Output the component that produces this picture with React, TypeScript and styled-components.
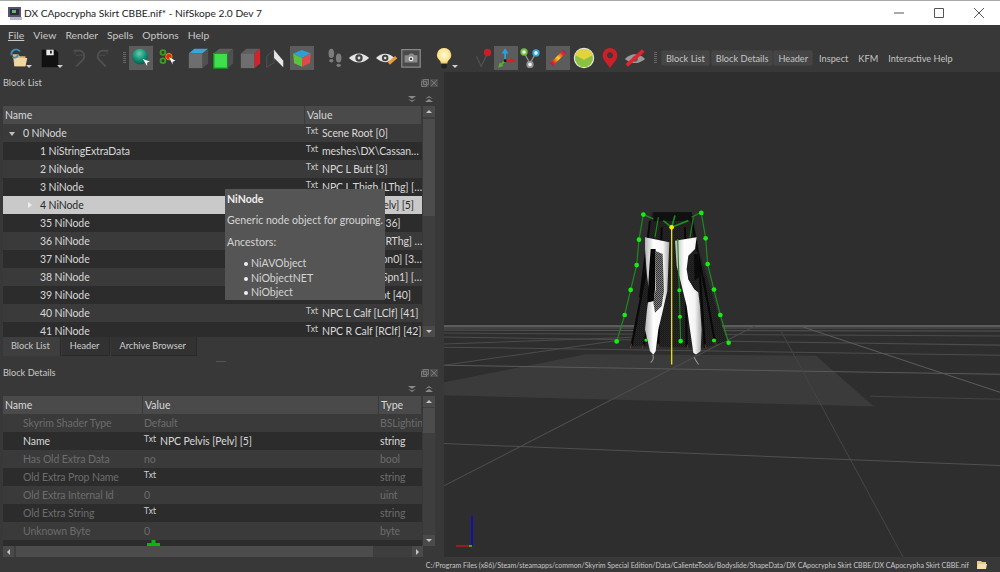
import * as React from 'react'
import styled, { createGlobalStyle } from 'styled-components'

const UI_FONT = 'Lato, "Open Sans", "Noto Sans", sans-serif'

const GlobalStyle = createGlobalStyle`
    html, body {
        margin: 0;
        padding: 0;
        background: #383838;
    }
`

const blocks = [
    { name: '0 NiNode', value: 'Scene Root [0]', indent: 20, arrow: 'down' },
    { name: '1 NiStringExtraData', value: 'meshes\\DX\\Cassandra\\Skirt.nif', indent: 37 },
    { name: '2 NiNode', value: 'NPC L Butt [3]', indent: 37 },
    { name: '3 NiNode', value: 'NPC L Thigh [LThg] [4]', indent: 37 },
    { name: '4 NiNode', value: 'NPC Pelvis [Pelv] [5]', indent: 37, arrow: 'right', selected: true },
    { name: '35 NiNode', value: 'NPC Thigh R [36]', indent: 37 },
    { name: '36 NiNode', value: 'NPC R Thigh [RThg] [37] extra', indent: 37 },
    { name: '37 NiNode', value: 'NPC Spine [Spn0] [38] extra', indent: 37 },
    { name: '38 NiNode', value: 'NPC Spine1 [Spn1] [39] extra', indent: 37 },
    { name: '39 NiNode', value: 'NPC Skirt Root [40]', indent: 37 },
    { name: '40 NiNode', value: 'NPC L Calf [LClf] [41]', indent: 37 },
    { name: '41 NiNode', value: 'NPC R Calf [RClf] [42]', indent: 37 },
]

const details = [
    { name: 'Skyrim Shader Type', value: 'Default', type: 'BSLightingShaderType' },
    { name: 'Name', value: 'NPC Pelvis [Pelv] [5]', type: 'string', txt: true, active: true },
    { name: 'Has Old Extra Data', value: 'no', type: 'bool' },
    { name: 'Old Extra Prop Name', value: '', type: 'string', txt: true },
    { name: 'Old Extra Internal Id', value: '0', type: 'uint' },
    { name: 'Old Extra String', value: '', type: 'string', txt: true },
    { name: 'Unknown Byte', value: '0', type: 'byte' },
]

const menus = ['File', 'View', 'Render', 'Spells', 'Options', 'Help']

const Cube = ({ top, front, side, edge }: { top: string; front: string; side: string; edge?: string }) => (
    <svg width="24" height="24" viewBox="0 0 24 24">
        <path d="M2 7L8 2H23L17 7z" fill={top} />
        <path d="M2 7h15v16H2z" fill={front} stroke={edge ?? 'none'} strokeWidth="1.400" />
        <path d="M17 7l6-5v16l-6 5z" fill={side} />
    </svg>
)

const icons: Record<string, React.ReactNode> = {
    open: (
        <svg width="24" height="24" viewBox="0 0 24 24">
            <path d="M5 8h6l2 2h6v11H7z" fill="#d9b878" />
            <path d="M7 12h14l-2 9H7z" fill="#f0d6a0" />
            <path d="M4 9a5 5 0 0 1 9-4" fill="none" stroke="#3c8fbe" strokeWidth="2" />
            <path d="M11 8a4 4 0 0 1-6 3" fill="none" stroke="#3c8fbe" strokeWidth="2" />
        </svg>
    ),
    save: (
        <svg width="24" height="24" viewBox="0 0 24 24">
            <path d="M3 3h15l3 3v16H3z" fill="#111" />
            <path d="M8 3h8v6H8z" fill="#e8e8e8" />
            <path d="M12 4h2v3h-2z" fill="#222" />
        </svg>
    ),
    undo: (
        <svg width="24" height="24" viewBox="0 0 24 24" fill="none" stroke="#505050" strokeWidth="2">
            <path d="M6 4l7 0a6 6 0 0 1 3 10l-7 7" />
            <path d="M9 4l-2 4M9 9l7 0" strokeWidth="1" />
        </svg>
    ),
    redo: (
        <svg width="24" height="24" viewBox="0 0 24 24" fill="none" stroke="#505050" strokeWidth="2">
            <path d="M18 4l-7 0a6 6 0 0 0-3 10l7 7" />
            <path d="M15 4l2 4M15 9l-7 0" strokeWidth="1" />
        </svg>
    ),
    sphere: (
        <svg width="24" height="24" viewBox="0 0 24 24">
            <defs>
                <radialGradient id="teal" cx="0.45" cy="0.3" r="0.8">
                    <stop offset="0" stopColor="#5fd0ae" />
                    <stop offset="0.55" stopColor="#0f8a6e" />
                    <stop offset="1" stopColor="#064a3c" />
                </radialGradient>
            </defs>
            <circle cx="11" cy="10.500" r="9" fill="url(#teal)" />
            <path d="M14 13l8 3-3 1 0 4z" fill="#fff" />
        </svg>
    ),
    select: (
        <svg width="24" height="24" viewBox="0 0 24 24" fill="none">
            <circle cx="6.500" cy="6" r="2.600" stroke="#3e9a2c" strokeWidth="2" />
            <circle cx="6.500" cy="15" r="2.600" stroke="#3e9a2c" strokeWidth="2" />
            <circle cx="13" cy="10.500" r="3.500" fill="#e02a10" stroke="#e09a10" strokeWidth="1" />
            <path d="M13 11l7 4-3 1 0 3z" fill="#fff" />
        </svg>
    ),
    boxTop: <Cube top="#3aa6d8" front="#6e6e6e" side="#505050" />,
    boxFront: <Cube top="#5e5e5e" front="#3ede4c" side="#505050" edge="#169a1e" />,
    boxSide: <Cube top="#5e5e5e" front="#6e6e6e" side="#d4222a" />,
    halfBox: (
        <svg width="24" height="24" viewBox="0 0 24 24">
            <path d="M3 10l8-7v14l-8 5z" fill="#3a3a3a" stroke="#666" strokeWidth="0.600" />
            <path d="M11 3l10 12v7L11 12z" fill="#e6e6e6" />
        </svg>
    ),
    rgbBox: (
        <svg width="24" height="24" viewBox="0 0 24 24">
            <path d="M2 7l10-4 10 4-10 5z" fill="#2f9ed4" />
            <path d="M2 7l10 5v10L3 18z" fill="#5cc23c" />
            <path d="M22 7l-10 5v10l9-4z" fill="#dd4a4a" />
        </svg>
    ),
    feet: (
        <svg width="24" height="24" viewBox="0 0 24 24" fill="#7c7c7c">
            <ellipse cx="8" cy="7" rx="3" ry="5" />
            <ellipse cx="8" cy="15" rx="2.400" ry="1.800" />
            <ellipse cx="16" cy="12" rx="3" ry="5" />
            <ellipse cx="16" cy="20" rx="2.400" ry="1.800" />
        </svg>
    ),
    eye: (
        <svg width="24" height="24" viewBox="0 0 24 24">
            <path d="M1 12q11-10 22 0q-11 10-22 0z" fill="#e4e4e4" />
            <circle cx="12" cy="12" r="4" fill="#444" />
            <circle cx="12" cy="12" r="1.500" fill="#ddd" />
        </svg>
    ),
    eyePen: (
        <svg width="24" height="24" viewBox="0 0 24 24">
            <path d="M0 12q10-9 20 0q-10 9-20 0z" fill="#e4e4e4" />
            <circle cx="10" cy="12" r="3.600" fill="#444" />
            <circle cx="10" cy="12" r="1.400" fill="#ddd" />
            <path d="M14 18l8-7" stroke="#ee9a34" strokeWidth="3.400" />
        </svg>
    ),
    camera: (
        <svg width="24" height="24" viewBox="0 0 24 24">
            <path d="M2 3h20v19H2z" fill="#4a4a4a" stroke="#888" strokeWidth="1.400" />
            <path d="M5 9h4l2-2h3l2 2h3v8H5z" fill="#8a8a8a" />
            <circle cx="12" cy="13" r="2.600" fill="#e6e6e6" />
            <circle cx="12" cy="13" r="1.200" fill="#333" />
        </svg>
    ),
    bulb: (
        <svg width="24" height="24" viewBox="0 0 24 24">
            <defs>
                <radialGradient id="bulbGlow" cx="0.5" cy="0.45" r="0.6">
                    <stop offset="0" stopColor="#fffbd8" />
                    <stop offset="0.7" stopColor="#fbe28a" />
                    <stop offset="1" stopColor="#d9b452" />
                </radialGradient>
            </defs>
            <path d="M11 1a7.600 7.600 0 0 1 5 13.400c-1 1-1.400 2-1.400 3.600h-7.200c0-1.600-.4-2.600-1.400-3.600A7.600 7.600 0 0 1 11 1z" fill="url(#bulbGlow)" />
            <path d="M8 18.500h6v3.500l-1.500 1.500h-3L8 22z" fill="#222" />
        </svg>
    ),
    pin: (
        <svg width="24" height="24" viewBox="0 0 24 24">
            <path d="M6 10l5 11 7-14" fill="none" stroke="#505050" strokeWidth="1.400" />
            <circle cx="18" cy="6" r="4" fill="#c81e28" />
        </svg>
    ),
    axes: (
        <svg width="24" height="24" viewBox="0 0 24 24" fill="none" strokeWidth="2">
            <path d="M11 15V6" stroke="#2aa0e0" />
            <path d="M11 1l4 6H7z" fill="#2aa0e0" />
            <path d="M11 15h7" stroke="#d82020" />
            <path d="M23 15l-6-3v6z" fill="#d82020" />
            <path d="M11 15l-5 5" stroke="#58b030" />
            <path d="M3 23l2-6 4 4z" fill="#58b030" />
            <circle cx="11" cy="15" r="1.600" fill="#111" />
        </svg>
    ),
    nodes: (
        <svg width="24" height="24" viewBox="0 0 24 24" fill="none">
            <path d="M6 7l6 11M18 7l-6 11" stroke="#8e8e8e" strokeWidth="1.400" />
            <circle cx="5.500" cy="5.500" r="3" fill="#eee" stroke="#6cc03c" strokeWidth="2" />
            <circle cx="18.500" cy="6.500" r="3" fill="#eee" stroke="#2aa8e0" strokeWidth="2" />
            <circle cx="12" cy="19" r="3" fill="#eee" stroke="#909090" strokeWidth="2" />
        </svg>
    ),
    heat: (
        <svg width="24" height="24" viewBox="0 0 24 24">
            <defs>
                <linearGradient id="heatFill" x1="0" y1="1" x2="1" y2="0">
                    <stop offset="0" stopColor="#5a1e9c" />
                    <stop offset="0.25" stopColor="#e8281c" />
                    <stop offset="0.5" stopColor="#ffd420" />
                    <stop offset="0.75" stopColor="#e8281c" />
                    <stop offset="1" stopColor="#5a1e9c" />
                </linearGradient>
            </defs>
            <path d="M17 2l5 5-3 1-11 11-1 3-5-5 3-1L16 5z" fill="url(#heatFill)" />
        </svg>
    ),
    dial: (
        <svg width="24" height="24" viewBox="0 0 24 24">
            <circle cx="12" cy="12" r="10.500" fill="#8cc040" stroke="#e8e8e8" strokeWidth="1.200" />
            <path d="M2.500 9a10 10 0 0 1 19 0L12 14z" fill="#e2d23c" />
        </svg>
    ),
    mapPin: (
        <svg width="24" height="24" viewBox="0 0 24 24">
            <path d="M12 1a8 8 0 0 1 8 8c0 5-5 9-8 14-3-5-8-9-8-14a8 8 0 0 1 8-8z" fill="#cc1f28" />
            <circle cx="12" cy="9" r="3.200" fill="#3a3a3a" />
        </svg>
    ),
    eyeOff: (
        <svg width="24" height="24" viewBox="0 0 24 24">
            <path d="M1 13q11-10 22 0q-11 9-22 0z" fill="#9a9a9a" />
            <circle cx="12" cy="13" r="3" fill="#555" />
            <path d="M3 20L21 4" stroke="#e0262c" strokeWidth="4" />
        </svg>
    ),
}

const toolsLeft = [
    { icon: 'open', gap: 0, caret: true },
    { icon: 'save', gap: 7, caret: true },
    { icon: 'undo', gap: 5 },
    { icon: 'redo', gap: 0 },
]

const toolsMiddle = [
    { icon: 'sphere', gap: 3, on: true },
    { icon: 'select', gap: 3 },
    { icon: 'boxTop', gap: 6 },
    { icon: 'boxFront', gap: 1 },
    { icon: 'boxSide', gap: 3 },
    { icon: 'halfBox', gap: 1 },
    { icon: 'rgbBox', gap: 3, on: true },
    { icon: 'feet', gap: 9 },
    { icon: 'eye', gap: 0 },
    { icon: 'eyePen', gap: 4 },
    { icon: 'camera', gap: 0 },
    { icon: 'bulb', gap: 10, caret: true },
    { icon: 'pin', gap: 13 },
    { icon: 'axes', gap: 0, on: true },
    { icon: 'nodes', gap: 0 },
    { icon: 'heat', gap: 4, on: true },
    { icon: 'dial', gap: 2 },
    { icon: 'mapPin', gap: 2 },
    { icon: 'eyeOff', gap: 1 },
]

const Txt = () => <TxtMark>Txt</TxtMark>

const Scene = () => (
    <SceneSvg viewBox="444 72 556 483" preserveAspectRatio="none">
        <defs>
            <pattern id="laceDim" width="6" height="6" patternUnits="userSpaceOnUse">
                <rect width="6" height="6" fill="#181818" />
                <rect width="3" height="3" fill="#2c2c2c" />
                <rect x="3" y="3" width="3" height="3" fill="#242424" />
            </pattern>
            <pattern id="lace" width="6" height="6" patternUnits="userSpaceOnUse">
                <rect width="6" height="6" fill="#262626" />
                <rect width="3" height="3" fill="#a0a0a0" />
                <rect x="3" y="3" width="3" height="3" fill="#808080" />
            </pattern>
            <linearGradient id="leg" x1="0" x2="1" y1="0" y2="0">
                <stop offset="0" stopColor="#b4b4b4" />
                <stop offset="0.35" stopColor="#ffffff" />
                <stop offset="0.75" stopColor="#f4f4f4" />
                <stop offset="1" stopColor="#a8a8a8" />
            </linearGradient>
        </defs>
        <path d="M444 381L586 353L816 354.500L874 405L444 394z" fill="#3b3b3b" />
        <rect x="444" y="324" width="556" height="2" fill="#5e5e5e" />
        <g stroke="#4c4c4c" strokeWidth="1" fill="none">
            <path d="M444 327L1000 327M444 329L1000 330" stroke="#565656" />
            <path d="M444 332L1000 335" />
            <path d="M444 336L1000 344" />
            <path d="M444 346L1000 354" />
            <path d="M444 343L640 336" />
            <path d="M444 364L1000 373" stroke="#5a5a5a" />
            <path d="M444 364L621 339" />
            <path d="M444 484L755 325" />
            <path d="M800 325L1000 391" stroke="#5a5a5a" />
            <path d="M781 330L903 555" stroke="#444" />
            <path d="M444 442L1000 464" stroke="#505050" />
            <path d="M870 395L1000 398" stroke="#444" />
        </g>
        <g transform="translate(590 190) scale(0.3333)">
            <path d="M185 65L305 65L330 190L370 320L410 450L345 470L120 465L150 320L170 190z" fill="url(#laceDim)" />
            <path d="M190 65h115l5 25-120 2z" fill="#101010" />
            <g stroke="#080808" strokeWidth="6" fill="none">
                <path d="M172 220L125 465M195 300L160 465M215 110L205 460M285 110L290 465M325 190L345 470M340 260L375 455M180 90L150 320M305 90L350 320" />
            </g>
            <g stroke="#5a4020" strokeWidth="3" fill="none">
                <path d="M125 458L120 472M160 460L157 474M205 458L204 470M292 460L293 472M345 460L348 472M375 450L380 464" />
            </g>
            <path d="M165 140L238 155L232 300L217 365L205 415L197 480L190 490L180 480L165 415L170 365L175 325L177 300L170 245L165 175z" fill="url(#leg)" />
            <path d="M255 150L320 140L315 175L295 195L290 235L295 265L313 295L325 305L330 345L335 415L332 480L318 490L310 485L290 345L275 285L260 225z" fill="url(#leg)" />
            <path d="M182 175L197 175L195 295L192 330L172 335L177 245z" fill="#060606" />
            <path d="M195 180L218 190L222 300L215 345L195 365L190 335L197 295z" fill="url(#lace)" />
            <path d="M298 195L318 178L326 190L328 262L312 292L296 265L292 235z" fill="url(#laceDim)" />
            <path d="M312 190L326 190L328 258L314 270z" fill="#0a0a0a" />
            <path d="M188 490q6 14-6 24M312 498q8 14 14 22" stroke="#999" strokeWidth="3" fill="none" />
            <path d="M245 110L245 520" stroke="#e8e000" strokeWidth="4" />
            <g stroke="#1f8a1f" strokeWidth="3.500" fill="none">
                <path d="M160 72L147 147L140 223L122 297L104 372L80 451" />
                <path d="M334 67L347 143L353 220L372 296L391 372L416 455" />
                <path d="M160 72L190 85M333 65L305 80" strokeWidth="4" />
                <path d="M245 110L220 90M245 110L255 75M245 110L295 90" strokeWidth="5" />
                <path d="M205 80L195 140M310 80L300 140" />
                <path d="M263 145L268 298L270 377L272 450" />
            </g>
            <g fill="#12f012">
                <circle cx="160" cy="72" r="7" />
                <circle cx="147" cy="147" r="7" />
                <circle cx="140" cy="223" r="7" />
                <circle cx="122" cy="297" r="7" />
                <circle cx="104" cy="372" r="7" />
                <circle cx="80" cy="451" r="7" />
                <circle cx="334" cy="67" r="7" />
                <circle cx="347" cy="143" r="7" />
                <circle cx="353" cy="220" r="7" />
                <circle cx="372" cy="296" r="7" />
                <circle cx="391" cy="372" r="7" />
                <circle cx="416" cy="455" r="7" />
                <circle cx="268" cy="298" r="6" />
                <circle cx="270" cy="377" r="6" />
                <circle cx="272" cy="450" r="7" />
                <circle cx="168" cy="447" r="5" />
                <circle cx="372" cy="448" r="6" />
            </g>
            <circle cx="245" cy="110" r="7" fill="#f4f000" />
        </g>
        <path d="M472 514V544" stroke="#0a0ad8" strokeWidth="1.500" />
        <path d="M456 544H472" stroke="#c81414" strokeWidth="1.500" />
        <path d="M469 544H472" stroke="#2ccf2c" strokeWidth="1.500" />
    </SceneSvg>
)

const Dock = ({ title }: { title: string }) => (
    <>
        <DockTitle>
            <span>{title}</span>
            <DockButtons>
                <DockButton>
                    <svg width="8" height="8" viewBox="0 0 8 8" fill="none" stroke="#777">
                        <path d="M2.500.5h5v5h-5zM.5 2.500h5v5h-5z" />
                    </svg>
                </DockButton>
                <DockButton>
                    <svg width="8" height="8" viewBox="0 0 8 8" fill="none" stroke="#777">
                        <path d="M1 1l6 6M7 1L1 7" />
                    </svg>
                </DockButton>
            </DockButtons>
        </DockTitle>
        <ExpandRow>
            <svg width="8" height="8" viewBox="0 0 8 8" fill="#8a8a8a"><path d="M0 1h8L4 4zM0 4l4 3 4-3-4 1.500z" /></svg>
            <svg width="8" height="8" viewBox="0 0 8 8" fill="#8a8a8a"><path d="M0 7h8L4 4zM0 4l4-3 4 3-4-1.500z" /></svg>
        </ExpandRow>
    </>
)

const VScroll = ({ thumb, top }: { thumb: number; top: number }) => (
    <VBar>
        <ArrowCap><UpArrow /></ArrowCap>
        <VTrack>
            <VThumb $height={thumb} $top={top} />
        </VTrack>
        <ArrowCap><DownArrow /></ArrowCap>
    </VBar>
)

export default function App() {
    return (
        <Window>
            <GlobalStyle />
            <TitleBar>
                <AppIcon>
                    <svg width="16" height="16" viewBox="0 0 16 16">
                        <path d="M1 2h13v10H1z" fill="#5a5070" />
                        <path d="M3 4h9v6H3z" fill="#2b2a3a" />
                        <path d="M5 5h4v3H5z" fill="#6fb06f" />
                        <path d="M3 12h12v3H3z" fill="#b8b8c4" />
                    </svg>
                </AppIcon>
                <TitleText>DX CApocrypha Skirt CBBE.nif* - NifSkope 2.0 Dev 7</TitleText>
                <WindowControls>
                    <WindowControl>
                        <svg width="10" height="10" viewBox="0 0 10 10"><path d="M0 5h10" stroke="#555" /></svg>
                    </WindowControl>
                    <WindowControl>
                        <svg width="10" height="10" viewBox="0 0 10 10"><path d="M.5.500h9v9h-9z" fill="none" stroke="#555" /></svg>
                    </WindowControl>
                    <WindowControl>
                        <svg width="10" height="10" viewBox="0 0 10 10"><path d="M0 0l10 10M10 0L0 10" stroke="#555" /></svg>
                    </WindowControl>
                </WindowControls>
            </TitleBar>

            <MenuBar>
                {menus.map((m) => <MenuItem key={m}>{m}</MenuItem>)}
            </MenuBar>

            <Toolbar>
                {toolsLeft.map((t) => (
                    <Tool key={t.icon} $gap={t.gap}>
                        {icons[t.icon]}
                        {t.caret && <Caret />}
                    </Tool>
                ))}
                <GripHandle $gap={8} />
                {toolsMiddle.map((t) => (
                    <Tool key={t.icon} $gap={t.gap} $on={t.on}>
                        {icons[t.icon]}
                        {t.caret && <Caret />}
                    </Tool>
                ))}
                <GripHandle $gap={7} />
                <TextTool $on $gap={4}>Block List</TextTool>
                <TextTool $on $gap={1}>Block Details</TextTool>
                <TextTool $on $gap={0}>Header</TextTool>
                <TextTool $gap={1}>Inspect</TextTool>
                <TextTool $gap={0}>KFM</TextTool>
                <TextTool $gap={0}>Interactive Help</TextTool>
            </Toolbar>

            <Main>
                <LeftPane>
                    <Dock title="Block List" />
                    <TableFrame $height={231}>
                        <TableBody>
                            <HeaderRow>
                                <HeaderCell $width={302}>Name</HeaderCell>
                                <HeaderCell>Value</HeaderCell>
                            </HeaderRow>
                            {blocks.map((b, i) => (
                                <Row key={b.name} $odd={i % 2 === 1} $selected={b.selected}>
                                    <NameCell $width={302} $indent={b.indent}>
                                        {b.arrow === 'down' && <TreeDown />}
                                        {b.arrow === 'right' && <TreeRight />}
                                        {b.name}
                                    </NameCell>
                                    <ValueCell><Txt />{b.value}</ValueCell>
                                </Row>
                            ))}
                        </TableBody>
                        <VScroll thumb={97} top={2} />
                    </TableFrame>

                    <TabBar>
                        <Tab $active>Block List</Tab>
                        <Tab>Header</Tab>
                        <Tab>Archive Browser</Tab>
                    </TabBar>
                    <SplitGrip />

                    <Dock title="Block Details" />
                    <TableFrame $height={150}>
                        <TableBody>
                            <HeaderRow>
                                <HeaderCell $width={140}>Name</HeaderCell>
                                <HeaderCell $width={236}>Value</HeaderCell>
                                <HeaderCell>Type</HeaderCell>
                            </HeaderRow>
                            {details.map((d, i) => (
                                <Row key={d.name} $odd={i % 2 === 1} $muted={!d.active}>
                                    <NameCell $width={140} $indent={20}>{d.name}</NameCell>
                                    <ValueCell $width={236}>{d.txt && <Txt />}{d.value}</ValueCell>
                                    <TypeCell>{d.type}</TypeCell>
                                </Row>
                            ))}
                            <Row $odd>
                                <NameCell $width={140} $indent={20} />
                                <ValueCell $width={236} $alignTop>
                                    <PlusIcon width="13" height="13" viewBox="0 0 13 13">
                                        <path d="M4.500 0h4v3H13v4H8.500V13h-4V7H0V3h4.500z" fill="#0fb30f" />
                                    </PlusIcon>
                                </ValueCell>
                            </Row>
                        </TableBody>
                        <VScroll thumb={25} top={1} />
                    </TableFrame>
                    <HScroll>
                        <ArrowCap $wide><LeftArrow /></ArrowCap>
                        <HThumb />
                        <ArrowCap $wide><RightArrow /></ArrowCap>
                    </HScroll>

                    <Tooltip>
                        <TipTitle>NiNode</TipTitle>
                        <TipText>Generic node object for grouping.</TipText>
                        <TipText>Ancestors:</TipText>
                        <TipList>
                            <li>NiAVObject</li>
                            <li>NiObjectNET</li>
                            <li>NiObject</li>
                        </TipList>
                    </Tooltip>
                </LeftPane>

                <Viewport>
                    <Scene />
                </Viewport>
            </Main>

            <StatusBar>
                <StatusText>C:/Program Files (x86)/Steam/steamapps/common/Skyrim Special Edition/Data/CalienteTools/Bodyslide/ShapeData/DX CApocrypha Skirt CBBE/DX CApocrypha Skirt CBBE.nif</StatusText>
                <svg width="10" height="10" viewBox="0 0 10 10">
                    <path d="M0 1h4l1 1h4v7H0z" fill="#e8c98c" />
                    <path d="M1 4h9l-1 5H0z" fill="#f4dfb0" />
                </svg>
            </StatusBar>
        </Window>
    )
}

const Window = styled.div`
    width: 1000px;
    height: 572px;
    display: flex;
    flex-direction: column;
    overflow: hidden;
    background: #383838;
    color: #d4d4d4;
    font: 10.500px ${UI_FONT};
`

const TitleBar = styled.div`
    height: 25px;
    box-sizing: border-box;
    border-top: 1px solid #a8a8a8;
    background: #fff;
    display: flex;
    align-items: center;
    padding-left: 7px;
    color: #222;
`

const AppIcon = styled.div`
    width: 17px;
    height: 16px;
`

const TitleText = styled.div`
    font-size: 10.200px;
`

const WindowControls = styled.div`
    margin-left: auto;
    margin-right: 1px;
    display: flex;
`

const WindowControl = styled.div`
    width: 40px;
    height: 24px;
    display: flex;
    align-items: center;
    justify-content: center;
`

const MenuBar = styled.div`
    height: 19px;
    display: flex;
    align-items: center;
    padding-left: 8px;
    gap: 9px;
    font-size: 10.400px;
    color: #c8c8c8;
`

const MenuItem = styled.span`
    &:first-child {
        text-decoration: underline;
        text-underline-offset: 1px;
        text-decoration-thickness: 1px;
    }
`

const Toolbar = styled.div`
    height: 28px;
    display: flex;
    align-items: center;
    padding-left: 7px;
    white-space: nowrap;
`

const Tool = styled.div<{ $gap?: number; $on?: boolean }>`
    position: relative;
    flex: none;
    width: 24px;
    height: 24px;
    margin-left: ${(p) => p.$gap ?? 0}px;
    background: ${(p) => (p.$on ? '#5c5c5c' : 'none')};
    display: flex;
    align-items: center;
    justify-content: center;

    svg {
        transform: scale(${(p) => (p.$on ? 0.88 : 0.92)});
    }
`

const Caret = styled.span`
    position: absolute;
    right: -1px;
    bottom: 2px;
    border-left: 3px solid transparent;
    border-right: 3px solid transparent;
    border-top: 3px solid #d0d0d0;
`

const GripHandle = styled.div<{ $gap: number }>`
    flex: none;
    width: 3px;
    height: 12px;
    margin-left: ${(p) => p.$gap}px;
    background: repeating-linear-gradient(#666 0 1px, transparent 1px 2px);
`

const TextTool = styled.div<{ $gap: number; $on?: boolean }>`
    flex: none;
    height: 16px;
    line-height: 15px;
    box-sizing: border-box;
    padding: 0 4px;
    margin-left: ${(p) => p.$gap}px;
    border-radius: 2px;
    font-size: 9.200px;
    color: #c4c4c4;
    background: ${(p) => (p.$on ? '#454545' : 'none')};
    border: 1px solid ${(p) => (p.$on ? '#404040' : 'transparent')};
`

const Main = styled.div`
    flex: 1;
    min-height: 0;
    display: flex;
`

const LeftPane = styled.div`
    position: relative;
    width: 444px;
    flex: none;
    box-sizing: border-box;
    padding: 0 9px 0 3px;
`

const DockTitle = styled.div`
    height: 19px;
    display: flex;
    align-items: center;
    justify-content: space-between;
    padding-top: 2px;
    box-sizing: border-box;
    font-size: 9.200px;
    color: #c8c8c8;
`

const DockButtons = styled.div`
    display: flex;
    gap: 1px;
    margin-right: -3px;
`

const DockButton = styled.div`
    width: 8px;
    height: 8px;
    display: flex;
    background: #4c4c4c;
`

const ExpandRow = styled.div`
    height: 15px;
    display: flex;
    justify-content: flex-end;
    align-items: center;
    gap: 9px;
    padding-right: 2px;
`

const TableFrame = styled.div<{ $height: number }>`
    height: ${(p) => p.$height}px;
    display: flex;
`

const TableBody = styled.div`
    width: 420px;
    overflow: hidden;
`

const HeaderRow = styled.div`
    height: 18px;
    display: flex;
    background: #4a4a4a;
    color: #d8d8d8;
    font-size: 10.500px;
`

const HeaderCell = styled.div<{ $width?: number }>`
    box-sizing: border-box;
    width: ${(p) => (p.$width ? `${p.$width}px` : 'auto')};
    flex: ${(p) => (p.$width ? 'none' : 1)};
    padding-left: 2px;
    line-height: 18px;
    border-right: 1px solid #3a3a3a;
`

const Row = styled.div<{ $odd?: boolean; $selected?: boolean; $muted?: boolean }>`
    height: 18px;
    display: flex;
    align-items: center;
    font-size: 10.500px;
    letter-spacing: -0.1px;
    white-space: nowrap;
    background: ${(p) => (p.$selected ? '#c9c9c9' : p.$odd ? '#2c2c2c' : '#3a3a3a')};
    color: ${(p) => (p.$selected ? '#2a2a2a' : p.$muted ? '#6c6c6c' : '#d8d8d8')};
`

const NameCell = styled.div<{ $width: number; $indent: number }>`
    position: relative;
    box-sizing: border-box;
    width: ${(p) => p.$width}px;
    flex: none;
    padding-left: ${(p) => p.$indent}px;
`

const ValueCell = styled.div<{ $width?: number; $alignTop?: boolean }>`
    position: relative;
    box-sizing: border-box;
    width: ${(p) => (p.$width ? `${p.$width}px` : '118px')};
    flex: none;
    align-self: ${(p) => (p.$alignTop ? 'flex-start' : 'auto')};
    padding-left: 1px;
    overflow: hidden;
    text-overflow: ellipsis;
`

const TypeCell = styled.div`
    flex: 1;
    min-width: 0;
    overflow: hidden;
    padding-left: 1px;
`

const TxtMark = styled.span`
    display: inline-block;
    vertical-align: 3px;
    width: 15px;
    margin-right: 1px;
    font: 8px/7px "DejaVu Sans", sans-serif;
    letter-spacing: -0.3px;
    color: #d0d0d0;
`

const TreeDown = styled.span`
    position: absolute;
    left: 6px;
    top: 5px;
    border-left: 3px solid transparent;
    border-right: 3px solid transparent;
    border-top: 4px solid #c0c0c0;
`

const TreeRight = styled.span`
    position: absolute;
    left: 25px;
    top: 3px;
    border-top: 3px solid transparent;
    border-bottom: 3px solid transparent;
    border-left: 4px solid #ededed;
`

const PlusIcon = styled.svg`
    display: block;
    margin: 0 0 0 3px;
`

const VBar = styled.div`
    width: 12px;
    flex: none;
    margin-left: 1px;
    display: flex;
    flex-direction: column;
    background: #3e3e3e;
`

const VTrack = styled.div`
    flex: 1;
    position: relative;
`

const VThumb = styled.div<{ $height: number; $top: number }>`
    position: absolute;
    left: 0;
    right: 0;
    top: ${(p) => p.$top}px;
    height: ${(p) => p.$height}px;
    background: #4c4c4c;
`

const ArrowCap = styled.div<{ $wide?: boolean }>`
    flex: none;
    width: ${(p) => (p.$wide ? '11px' : '12px')};
    height: 11px;
    background: #4a4a4a;
    display: flex;
    align-items: center;
    justify-content: center;
`

const UpArrow = styled.span`
    border-left: 3px solid transparent;
    border-right: 3px solid transparent;
    border-bottom: 3px solid #c4c4c4;
`

const DownArrow = styled.span`
    border-left: 3px solid transparent;
    border-right: 3px solid transparent;
    border-top: 3px solid #c4c4c4;
`

const LeftArrow = styled.span`
    border-top: 3px solid transparent;
    border-bottom: 3px solid transparent;
    border-right: 3px solid #c4c4c4;
`

const RightArrow = styled.span`
    border-top: 3px solid transparent;
    border-bottom: 3px solid transparent;
    border-left: 3px solid #c4c4c4;
`

const TabBar = styled.div`
    height: 19px;
    display: flex;
    gap: 1px;
    font-size: 9.200px;
`

const Tab = styled.div<{ $active?: boolean }>`
    padding: 0 10px 0 8px;
    line-height: 18px;
    box-sizing: border-box;
    background: ${(p) => (p.$active ? '#3e3e3e' : '#323232')};
    border-right: 1px solid #2a2a2a;
    border-bottom: ${(p) => (p.$active ? 'none' : '1px solid #2a2a2a')};
    color: ${(p) => (p.$active ? '#c8c8c8' : '#d0d0d0')};
`

const SplitGrip = styled.div`
    height: 5px;
    margin: 0 auto;
    width: 10px;
    border-bottom: 1px solid #555;
    transform: translateX(2px);
`

const HScroll = styled.div`
    width: 420px;
    height: 11px;
    display: flex;
    background: #3e3e3e;
    gap: 2px;
`

const HThumb = styled.div`
    width: 357px;
    background: #4c4c4c;
    margin-right: auto;
`

const Tooltip = styled.div`
    position: absolute;
    left: 225px;
    top: 117px;
    width: 160px;
    height: 111px;
    box-sizing: border-box;
    padding: 4px 2px;
    background: #555;
    color: #d4d4d4;
    font-size: 10.600px;
    white-space: nowrap;
`

const TipTitle = styled.div`
    font-weight: 700;
    color: #eee;
    line-height: 12px;
`

const TipText = styled.div`
    margin-top: 8px;
    line-height: 14px;
`

const TipList = styled.ul`
    list-style: none;
    margin: 7px 0 0;
    padding: 0 0 0 24px;
    line-height: 14.500px;

    li::before {
        content: '';
        display: inline-block;
        width: 4px;
        height: 4px;
        margin: 0 3px 1px -7px;
        border-radius: 50%;
        background: #f0f0f0;
    }
`

const Viewport = styled.div`
    flex: 1;
    position: relative;
    background: #2e2e2e;
`

const SceneSvg = styled.svg`
    position: absolute;
    inset: 0;
    width: 100%;
    height: 100%;
`

const StatusBar = styled.div`
    height: 15px;
    flex: none;
    display: flex;
    align-items: center;
    justify-content: flex-end;
    gap: 8px;
    padding-right: 13px;
    background: #383838;
`

const StatusText = styled.div`
    font-size: 7px;
    color: #c8c8c8;
    white-space: nowrap;
`
